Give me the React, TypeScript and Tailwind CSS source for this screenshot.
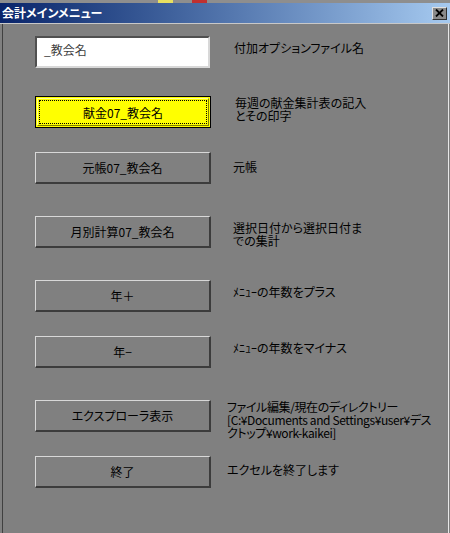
import React from "react";

const font = { fontFamily: '"Noto Sans CJK JP", "MS PGothic", sans-serif' };

function Btn({ label, yellow }: { label: string; yellow?: boolean }) {
  if (yellow) {
    return (
      <div className="w-[176px] h-[32px] shrink-0 border border-black bg-[#ffff00] p-[1px]">
        <div className="w-full h-full border-t border-l border-t-[#ffffa0] border-l-[#ffffa0] border-b border-r border-b-[#808000] border-r-[#808000] p-[1px]">
          <div className="w-full h-full border border-dotted border-black flex items-center justify-center text-[12px] leading-[13px] text-black">
            {label}
          </div>
        </div>
      </div>
    );
  }
  return (
    <div className="w-[176px] h-[32px] shrink-0 border-t border-l border-t-[#d8d8d8] border-l-[#d8d8d8] border-b-2 border-r-2 border-b-[#3c3c3c] border-r-[#3c3c3c] bg-[#808080] flex items-center justify-center text-[12px] leading-[13px] text-black">
      {label}
    </div>
  );
}

export default function App() {
  return (
    <div className="w-[450px] h-[533px] bg-[#808080] overflow-hidden flex flex-col" style={font}>
      {/* top strip */}
      <div className="h-[3px] shrink-0 bg-[#8e8e8e] flex">
        <div className="w-[158px]" />
        <div className="w-[15px] bg-[#e8e060]" />
        <div className="w-[19px]" />
        <div className="w-[15px] bg-[#c03030]" />
      </div>
      {/* title bar */}
      <div className="h-[20px] shrink-0 bg-gradient-to-r from-[#0a246a] to-[#a6caf0] flex items-center justify-between pl-[2px] pr-[3px]">
        <span className="text-white font-bold text-[12px] leading-[14px] [font-feature-settings:'palt']">会計メインメニュー</span>
        <div className="w-[15px] h-[13px] bg-[#8a8a8a] border-t border-l border-t-[#e0e0e0] border-l-[#e0e0e0] border-b border-r border-b-[#303030] border-r-[#303030] flex items-center justify-center">
          <svg width="9" height="8" viewBox="0 0 9 8">
            <path d="M1 0.5 L8 7.5 M8 0.5 L1 7.5" stroke="#000" strokeWidth="1.8" />
          </svg>
        </div>
      </div>
      <div className="h-[1px] shrink-0 bg-[#c8c8c8]" />
      {/* body */}
      <div className="flex-1 pl-[2px] pr-[1px]">
        <div className="h-full border-l border-l-[#404040] border-r border-r-[#e8e8e8] flex flex-col pl-[32px] text-black text-[12px] leading-[13px] [font-feature-settings:'palt']">
          {/* row 1 */}
          <div className="flex h-[32px] mt-[12px]">
            <div className="w-[175px] h-[32px] bg-white border-t-2 border-l-2 border-t-[#505050] border-l-[#505050] border-b-2 border-r-2 border-b-[#d8d8d8] border-r-[#d8d8d8] pl-[7px] pt-[5px] text-[#404040]">
              _教会名
            </div>
            <div className="ml-[24px] pt-[5px]">付加オプションファイル名</div>
          </div>
          {/* row 2 */}
          <div className="flex h-[32px] mt-[28px]">
            <Btn label="献金07_教会名" yellow />
            <div className="ml-[24px]">
              毎週の献金集計表の記入
              <br />
              とその印字
            </div>
          </div>
          <div className="flex h-[32px] mt-[24px]">
            <Btn label="元帳07_教会名" />
            <div className="ml-[22px] pt-[8px]">元帳</div>
          </div>
          <div className="flex h-[32px] mt-[32px]">
            <Btn label="月別計算07_教会名" />
            <div className="ml-[22px] pt-[5px]">
              選択日付から選択日付ま
              <br />
              での集計
            </div>
          </div>
          <div className="flex h-[32px] mt-[32px]">
            <Btn label="年＋" />
            <div className="ml-[22px] pt-[5px]">ﾒﾆｭｰの年数をプラス</div>
          </div>
          <div className="flex h-[32px] mt-[24px]">
            <Btn label="年−" />
            <div className="ml-[22px] pt-[5px]">ﾒﾆｭｰの年数をマイナス</div>
          </div>
          <div className="flex h-[32px] mt-[32px]">
            <Btn label="エクスプローラ表示" />
            <div className="ml-[16px] whitespace-nowrap tracking-[-0.4px]">
              ファイル編集/現在のディレクトリー
              <br />
              [C:¥Documents and Settings¥user¥デス
              <br />
              クトップ¥work-kaikei]
            </div>
          </div>
          <div className="flex h-[32px] mt-[24px]">
            <Btn label="終了" />
            <div className="ml-[16px] pt-[7px]">エクセルを終了します</div>
          </div>
        </div>
      </div>
    </div>
  );
}
